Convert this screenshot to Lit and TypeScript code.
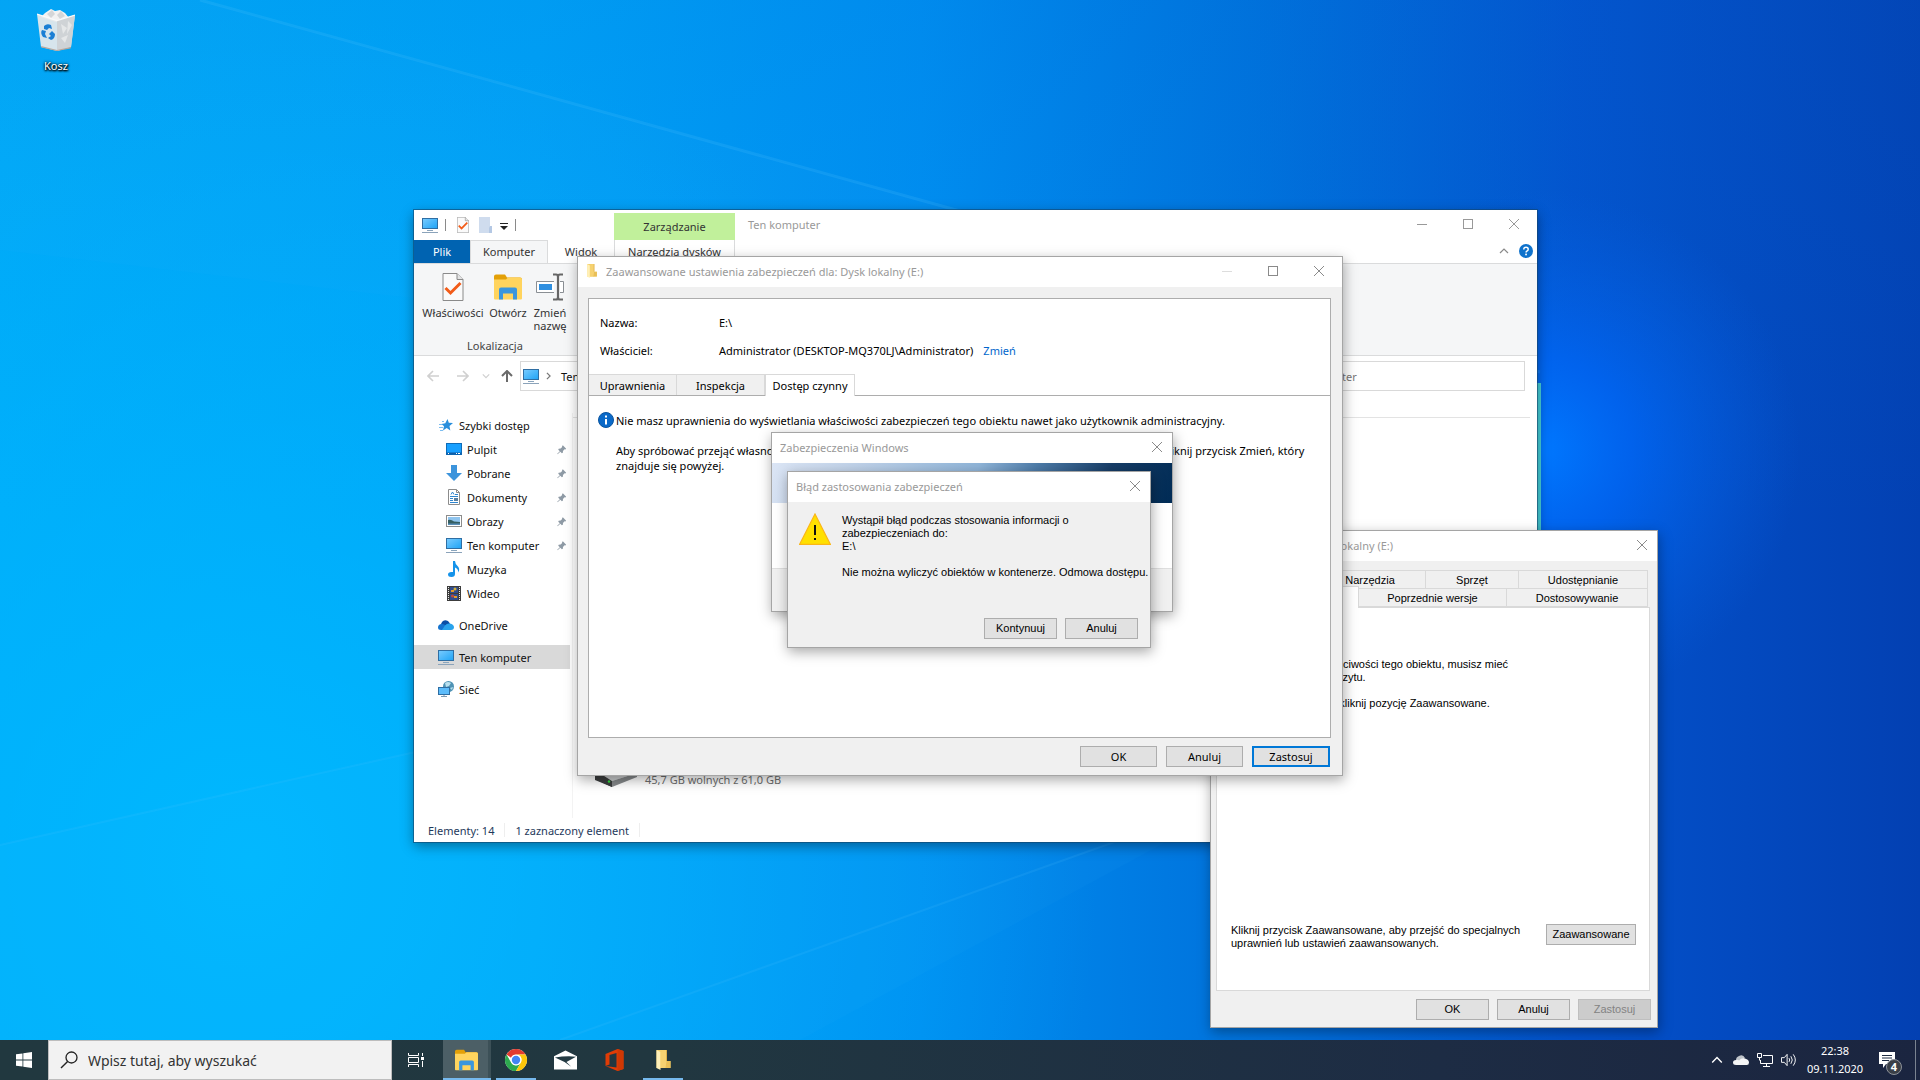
import { LitElement, html, css, svg, nothing, TemplateResult } from "lit";
import { customElement, property } from "lit/decorators.js";

/* ---------- Icons ---------- */

const monitor = svg`
  <defs><linearGradient id="scr" x1="0" y1="0" x2="1" y2="1"><stop offset="0" stop-color="#7accff"/><stop offset="1" stop-color="#1ea3f5"/></linearGradient></defs>
  <rect x="0.5" y="1.5" width="15" height="10" fill="url(#scr)" stroke="#2f6ea3"/>
  <path d="M5 13.5h6" stroke="#8aa5bd"/><path d="M0 15.5h16" stroke="#8ba3ba"/>`;

const explorerFolder = svg`
  <path d="M0 2q0-2 2-2h9l2 3h13q2 0 2 2v5H0z" fill="#e3a008"/>
  <path d="M0 5h12l2-2h12q2 0 2 2v19q0 1-1 1H1q-1 0-1-1z" fill="#ffd45e"/>
  <path d="M5 25V15q0-2 2-2h14q2 0 2 2v10h-4v-6h-10v6z" fill="#3a96dd"/>`;

const checkedPage = svg`
  <path d="M.5.5h14l6 6v21H.5z" fill="#fafafa" stroke="#8a8a8a"/>
  <path d="M14.5.5v6h6" fill="#e4e4e4" stroke="#8a8a8a"/>
  <path d="M3 15l5 5L18 10" fill="none" stroke="#f25c19" stroke-width="3"/>`;

const ICONS: Record<string, [string, TemplateResult]> = {
  monitor: ["0 0 16 16", monitor],
  explorer: ["0 0 28 25", explorerFolder],
  properties: ["0 0 21 28", checkedPage],
  blankfolder: ["0 0 13 16", svg`<path d="M0 0h11v10h2v6H0z" fill="#cfdcee"/><path d="M11 9h2v7h-3v-5z" fill="#b4c8e4"/>`],
  rename: ["0 0 28 27", svg`
    <path d="M18 8H.5v11H18M24 8h3.500v11H24" fill="#fff" stroke="#8a8f94"/>
    <rect x="3" y="10.500" width="13" height="6" fill="#2f8fe0"/>
    <path d="M22 2.500v22" stroke="#666" stroke-width="2.200"/>
    <path d="M17 1h3q2 0 2 2 0-2 2-2h3M17 26h3q2 0 2-2 0 2 2 2h3" fill="none" stroke="#666" stroke-width="2.200"/>`],
  minimize: ["0 0 10 10", svg`<path d="M0 5.500h10" stroke="currentColor"/>`],
  maximize: ["0 0 10 10", svg`<rect x=".5" y=".5" width="9" height="9" fill="none" stroke="currentColor"/>`],
  close: ["0 0 10 10", svg`<path d="M0 0l10 10M10 0L0 10" stroke="currentColor"/>`],
  caretline: ["0 0 8 8", svg`<path d="M0 .5h8" stroke="#222"/><path d="M0 3h8L4 7z" fill="#222"/>`],
  up: ["0 0 10 6", svg`<path d="M1 5l4-4 4 4" fill="none" stroke="currentColor" stroke-width="1.200"/>`],
  down: ["0 0 10 6", svg`<path d="M1 1l4 4 4-4" fill="none" stroke="currentColor" stroke-width="1.500"/>`],
  right: ["0 0 6 10", svg`<path d="M1 1l4 4-4 4" fill="none" stroke="currentColor" stroke-width="1.500"/>`],
  help: ["0 0 14 14", svg`<circle cx="7" cy="7" r="7" fill="#0f72cc"/><path d="M4.800 5.400q0-2.200 2.200-2.200t2.200 2q0 1.200-1.300 1.900-.8.500-.8 1.400" fill="none" stroke="#fff" stroke-width="1.500"/><rect x="6.200" y="9.600" width="1.700" height="1.700" fill="#fff"/>`],
  back: ["0 0 12 12", svg`<path d="M12 6H1M6 1L1 6l5 5" fill="none" stroke="currentColor" stroke-width="1.600"/>`],
  forward: ["0 0 12 12", svg`<path d="M0 6h11M6 1l5 5-5 5" fill="none" stroke="currentColor" stroke-width="1.600"/>`],
  parent: ["0 0 12 12", svg`<path d="M6 12V1M1 6l5-5 5 5" fill="none" stroke="currentColor" stroke-width="2"/>`],
  star: ["0 0 16 16", svg`<path d="M9.500 2l1.300 3.700L15 6l-3.500 3 .8 4.500L8.700 11 5 13.500l1-4.200L3.500 7l3.800-.8z" fill="#2a8fdc"/><path d="M1 7.500h3M1 10.500h4M2 13.500h3M4 4.500h2" stroke="#7cbdf0"/>`],
  desktop: ["0 0 16 16", svg`<rect x=".5" y="2.500" width="15" height="11" fill="#18a0ff" stroke="#0e6cb8"/><path d="M.5 12.500h15" stroke="#0e5ea8" stroke-width="2"/><path d="M2 12.500h1M10 12.500h1M12 12.500h2" stroke="#fff"/>`],
  download: ["0 0 16 16", svg`<path d="M5 0h6v8h5l-8 8-8-8h5z" fill="#3c94dc"/>`],
  document: ["0 0 16 16", svg`<path d="M2.500.5h8l3 3v12h-11z" fill="#fff" stroke="#8c8c8c"/><path d="M10.500.5v3h3" fill="none" stroke="#8c8c8c"/><path d="M5 5.500l1.500-2.500L8 5.500M9 5.500h3M4 7.500h8M4 13.500h8M4 9.500h3M4 11.500h3" stroke="#2f86cf" fill="none"/><rect x="8" y="9" width="4" height="3" fill="#5a7f9e"/>`],
  pictures: ["0 0 16 16", svg`<rect x=".5" y="2.500" width="15" height="11" fill="#fff" stroke="#8c8c8c"/><rect x="2" y="4" width="12" height="8" fill="#8fc4ee"/><path d="M2 7q3-1 6 1.500l6 .5v3H2z" fill="#355f63"/><path d="M2 10.500h12V12H2z" fill="#5a8fb8"/>`],
  music: ["0 0 16 16", svg`<path d="M7 0h2q0 3 3 5.500 2 2 .5 6Q12 7.500 9 6.500V13q0 3-3.500 3Q2 16 2 13.500T5.500 11H7z" fill="#1593ea"/>`],
  video: ["0 0 16 16", svg`<rect x="1" y="1" width="14" height="15" fill="#3c3c3c"/><rect x="4" y="2" width="8" height="6" fill="#314d8c"/><rect x="4" y="9" width="8" height="6" fill="#314d8c"/><path d="M5 5h3v2H5zM8 11h3v2H8z" fill="#e39a2b"/><circle cx="9" cy="4" r="1.500" fill="#d4b13a"/><circle cx="6.500" cy="11" r="1.500" fill="#c1493a"/><path d="M2.500 2v14M13.500 2v14" stroke="#e8e8e8" stroke-dasharray="1 1"/>`],
  onedrive: ["0 0 16 16", svg`<path d="M3 8q0-3 3-4.500Q9.500 2 12 6.500L8 10z" fill="#0a4fa6"/><path d="M0 10.500Q0 7.500 3 7q2-.5 4 1l5 5H3q-3 0-3-2.500z" fill="#1473cf"/><path d="M7 8.500Q9 6 12 6.500q3.500.5 4 3.500 0 3-3 3H4z" fill="#29a3ec"/>`],
  network: ["0 0 16 16", svg`<circle cx="10.500" cy="5.500" r="5.500" fill="#4f93b5"/><path d="M7 2q3-2 6 0l-2 3-3 1zM12 7l3-1-1 3z" fill="#b9e0ee"/><rect x=".5" y="6.500" width="11" height="7" fill="#5cbcfb" stroke="#2f6ea3"/><path d="M6 14v1M3 15.500h6" stroke="#7d9bb3"/>`],
  pin: ["0 0 12 12", svg`<path d="M7 1l4 4-1 1-1-.2L7.200 7.700 7 10 5.800 10.500 4 8.600.7 11.600.3 11.200 3.400 8 1.500 6.200 2 5l2.300-.2L6.200 3 6 2z" fill="#8e9aa5"/>`],
  drive: ["0 0 42 20", svg`<path d="M0 8L17 17 17 20 0 12z" fill="#333"/><path d="M0 3L22 0 42 6 17 14z" fill="#c9cbcc"/><path d="M0 3l17 11v6L0 13z" fill="#3b3d3e"/><path d="M17 14L42 6v4L17 20z" fill="#85888a"/><circle cx="14" cy="14.500" r="1.200" fill="#31e03c"/>`],
  smallfolder: ["0 0 14 20", svg`<path d="M0 0h10v18H0z" fill="#f5d06b"/><path d="M0 0l4 2v18l-4-2z" fill="#fff0b8"/><path d="M4 2l6-2v11h4v7H4z" fill="#f6d271"/><path d="M10 11h4v7h-5z" fill="#e9bf57"/><path d="M10 0v11" stroke="#dcb04a" stroke-width="1"/>`],
  info: ["0 0 16 16", svg`<circle cx="8" cy="8" r="7.500" fill="#0a69c8" stroke="#0a549f"/><path d="M8 7v5.500" stroke="#fff" stroke-width="2"/><rect x="7" y="3.500" width="2" height="2" fill="#fff"/>`],
  warning: ["0 0 32 32", svg`<path d="M16 1L31.300 31.300H.7z" fill="#ffe000" stroke="#fbb616" stroke-width="1.200"/><path d="M16 12v10" stroke="#111" stroke-width="2"/><rect x="15" y="25" width="2" height="2" fill="#111"/>`],
  bin: ["0 0 38 43", svg`
    <path d="M8 5l6-4 4 2 5-1 5 3 4 5-13 4L4 9z" fill="#f2f2f2"/><path d="M10 6l5-4 3 4-4 4zM20 7l4-4 4 5-5 3z" fill="#d4d6d8"/>
    <path d="M0 6l20 6.500L38 7l-4 32-14 4-16-4z" fill="#e7e9eb" opacity=".93"/>
    <path d="M20 12.500L38 7l-4 32-14 4z" fill="#cfd3d6"/><path d="M24 16l6 4-4 6zM31 13l4 4-5 9zM24 30l7-3-3 8z" fill="#e5e7e8"/>
    <path d="M4 38l16 4 14-3-.5 1.500L20 43 4.500 39.500z" fill="#b9a79c"/>
    <path d="M0 6l20 6.500L38 7" fill="none" stroke="#f8fafb" stroke-width="1.200"/>
    <path d="M7 18q3-3 7-1l1 4-3-1-2 2-3-1zM5 22l4 1-1 3 2 4-4-1q-3-4-1-7zM12 26l3-3 3 3q0 5-4 6l-3-2 3-2z" fill="#1b7fd4"/>`],
  start: ["0 0 16 16", svg`<path d="M0 2.300L6.500 1.400v6.200H0zM7.300 1.300L16 0v7.600H7.300zM0 8.400h6.500v6.200L0 13.700zM7.300 8.400H16V16l-8.700-1.200z" fill="#fff"/>`],
  search: ["0 0 18 18", svg`<circle cx="11.500" cy="6.500" r="5.500" fill="none" stroke="#222" stroke-width="1.300"/><path d="M7.600 10.400L1 17" stroke="#222" stroke-width="1.400"/>`],
  taskview: ["0 0 16 16", svg`<path d="M.5 1v2.500h10V1M.5 15v-2.500h10V15M.5 5.500h10v5H.5z" fill="none" stroke="#fff"/><path d="M14.500 1v3M14.500 9v6" stroke="#fff"/><rect x="13" y="5" width="3" height="3" fill="#fff"/>`],
  chrome: ["0 0 24 24", svg`<circle cx="12" cy="12" r="11" fill="#fff"/><path d="M2.470 6.500A11 11 0 0 1 21.530 6.500H12a5.500 5.500 0 0 0-5 3.200z" fill="#e33b2e"/><path d="M2.470 6.500A11 11 0 0 0 12 23l4.760-8.250A5.500 5.500 0 0 1 7.240 14.750z" fill="#2da94f"/><path d="M21.530 6.500A11 11 0 0 1 12 23l4.760-8.250A5.500 5.500 0 0 0 15 7l-3-.5z" fill="#fdc60a"/><circle cx="12" cy="12" r="5.200" fill="#fff"/><circle cx="12" cy="12" r="4.200" fill="#4285f4"/>`],
  mail: ["0 0 24 20" , svg`<path d="M0 6L12 0l12 6v14H0z" fill="#fff"/><path d="M1 7.500q11-2 22-1L13 12l5 5-7-5z" fill="#233a43"/>`],
  office: ["0 0 18 22", svg`<path d="M0 5l12-5 6 2v18l-6 2-12-5 11 1.500V4L4 6v9.500L0 17z" fill="#e03c06"/><path d="M12 0l6 2v18l-6 2z" fill="#d03804"/>`],
  traycloud: ["0 0 16 12", svg`<path d="M3 6q0-3 3-4 4-2 6 2l-5 4z" fill="#bfc4ca"/><path d="M3 11q-3 0-3-2.500T3 6q2-.5 3 .5Q8.500 3.500 12 4.500q4 1 4 4T13 11z" fill="#f4f5f6"/>`],
  ethernet: ["0 0 16 14", svg`<path d="M6 2.500h9.500v8H3.500V7M9.500 11v2.500M6 13.500h7" fill="none" stroke="#fff"/><path d="M.5.5h4v4h-4zM2.500 4.500v3" fill="none" stroke="#fff"/>`],
  speaker: ["0 0 17 14", svg`<path d="M.5 4.500h3l3-3.500v12l-3-3.500h-3z" fill="none" stroke="#fff"/><path d="M8.500 5q1.500 2 0 4M10.500 3q3 4 0 8M13 1q4.500 6 0 12" fill="none" stroke="#fff"/>`],
  notice: ["0 0 16 16", svg`<path d="M0 0h16v12H7l-3 4v-4H0z" fill="#fff"/><path d="M3 3.500h10M3 6h10M3 8.500h7" stroke="#1d2b42"/>`],
};

@customElement("ui-icon")
export class UiIcon extends LitElement {
  @property() name = "";
  static styles = css`
    :host { display: inline-flex; flex: none; width: 16px; height: 16px; }
    svg { width: 100%; height: 100%; display: block; }
  `;
  render() {
    const [box, shape] = ICONS[this.name];
    return html`<svg viewBox=${box} preserveAspectRatio="xMidYMid meet" aria-hidden="true">${shape}</svg>`;
  }
}

const base = css`
  * { box-sizing: border-box; }
  button, input { font: inherit; color: inherit; margin: 0; }
  p { margin: 0; }
`;

/* ---------- Window frame ---------- */

@customElement("desk-window")
export class DeskWindow extends LitElement {
  @property() heading = "";
  @property() icon = "";
  @property({ type: Boolean }) sizable = false;

  static styles = [base, css`
    :host { position: absolute; display: flex; flex-direction: column; box-sizing: border-box; border: 1px solid #a5a5a5; background: #f0f0f0; box-shadow: 1px 4px 12px rgba(0, 0, 0, 0.34); }
    .bar { display: flex; align-items: center; height: 30px; flex: none; background: #fff; color: #999; padding: 0 0 2px 8px; }
    .title { flex: 1; white-space: nowrap; }
    .lead { width: 12px; height: 14px; margin-right: 8px; }
    .lead.drive { width: 16px; }
    .cap { width: 30px; height: 28px; border: 0; padding: 0; background: none; display: flex; align-items: center; justify-content: center; color: #8a8a8a; }
    .cap.wide { width: 46px; }
    .cap:disabled { color: #ddd; }
    .cap ui-icon { width: 10px; height: 10px; }
  `];

  render() {
    return html`
      <header class="bar">
        ${this.icon ? html`<ui-icon class="lead ${this.icon}" name=${this.icon}></ui-icon>` : nothing}
        <span class="title">${this.heading}</span>
        ${this.sizable ? html`
          <button class="cap wide" disabled aria-label="Minimalizuj"><ui-icon name="minimize"></ui-icon></button>
          <button class="cap wide" aria-label="Maksymalizuj"><ui-icon name="maximize"></ui-icon></button>` : nothing}
        <button class="cap ${this.sizable ? "wide" : ""}" aria-label="Zamknij"><ui-icon name="close"></ui-icon></button>
      </header>
      <slot></slot>`;
  }
}

/* ---------- File explorer ---------- */

const TREE = [
  { label: "Szybki dostęp", icon: "star", level: 0 },
  { label: "Pulpit", icon: "desktop", level: 1, pinned: true },
  { label: "Pobrane", icon: "download", level: 1, pinned: true },
  { label: "Dokumenty", icon: "document", level: 1, pinned: true },
  { label: "Obrazy", icon: "pictures", level: 1, pinned: true },
  { label: "Ten komputer", icon: "monitor", level: 1, pinned: true },
  { label: "Muzyka", icon: "music", level: 1 },
  { label: "Wideo", icon: "video", level: 1 },
  { label: "OneDrive", icon: "onedrive", level: 0 },
  { label: "Ten komputer", icon: "monitor", level: 0, selected: true },
  { label: "Sieć", icon: "network", level: 0 },
];

@customElement("file-explorer")
export class FileExplorer extends LitElement {
  static styles = [base, css`
    :host { position: absolute; display: flex; flex-direction: column; background: #fff; box-shadow: 0 0 0 1px rgba(20, 70, 110, 0.6), 0 4px 12px rgba(0, 0, 0, 0.4); }
    button { border: 0; background: none; padding: 0; }
    .head { display: grid; grid-template-columns: 200px 121px 1fr; height: 53px; flex: none; }
    .left { display: flex; flex-direction: column; }
    .quick { display: flex; align-items: center; height: 30px; padding-left: 8px; }
    .rule { width: 1px; height: 12px; background: #8a8a8a; }
    .quick .rule { margin: 0 11px 0 7px; }
    .quick .page { width: 12px; height: 16px; margin-right: 10px; }
    .quick button { display: flex; }
    .blank { width: 13px; height: 16px; }
    .caret { width: 8px; height: 8px; margin-left: 8px; margin-top: 4px; }
    .tabs { display: flex; height: 23px; color: #333; }
    .tabs button { height: 23px; width: 66px; }
    .tabs .file { width: 56px; background: #0063b1; color: #fff; }
    .tabs .current { width: 78px; background: #f5f6f7; border: 1px solid #dadbdc; border-bottom: 0; height: 24px; padding-bottom: 2px; }
    .context { display: flex; flex-direction: column; padding-top: 3px; text-align: center; color: #333; }
    .context span { background: #c1f09b; height: 27px; line-height: 27px; }
    .context button { height: 23px; border: 1px solid #dadbdc; border-width: 0 1px; }
    .caption { display: flex; flex-direction: column; }
    .row { display: flex; align-items: center; color: #999; height: 28px; padding-left: 13px; }
    .row .title { flex: 1; }
    .cap { width: 46px; height: 28px; display: flex; justify-content: center; align-items: center; }
    .cap ui-icon { width: 10px; height: 10px; }
    .tools { display: flex; flex: 1; justify-content: flex-end; align-items: center; gap: 10px; padding-right: 4px; color: #8a8a8a; }
    .tools button { display: flex; }
    .tools ui-icon { width: 14px; height: 14px; }
    .tools .fold { width: 10px; height: 6px; }
    .ribbon { height: 93px; flex: none; background: #f5f6f7; border: 1px solid #dadbdc; border-width: 1px 0; display: flex; color: #444; }
    .group { display: flex; flex-direction: column; align-items: center; width: 162px; }
    .actions { display: flex; padding-top: 9px; height: 74px; align-items: flex-start; }
    .actions button { display: flex; flex-direction: column; align-items: center; gap: 5px; line-height: 13px; width: 44px; color: #333; }
    .actions button:first-child { width: 66px; }
    .actions button:last-child { width: 40px; }
    .actions ui-icon { width: 28px; height: 28px; }
    .nav { display: flex; align-items: center; height: 40px; flex: none; padding: 0 12px 0 13px; color: #d0d0d0; }
    .nav > button { display: flex; margin-right: 18px; }
    .nav > button ui-icon { width: 12px; height: 12px; }
    .nav > .next { margin-right: 13px; }
    .nav > .recent { margin-right: 11px; }
    .nav > .recent ui-icon { width: 8px; height: 6px; }
    .nav > .parent { color: #6a6a6a; margin-right: 7px; }
    .crumbs { display: flex; align-items: center; gap: 7px; flex: 1; height: 30px; border: 1px solid #d9d9d9; padding-left: 2px; color: #777; }
    .crumbs .sep { width: 5px; height: 8px; }
    .crumbs span { color: #111; margin-left: 3px; }
    .find { width: 336px; margin-left: 10px; height: 30px; border: 1px solid #d9d9d9; padding: 0 0 0 34px; outline: 0; background: #fff; }
    .find::placeholder { color: #767676; opacity: 1; }
    .body { display: flex; flex: 1; min-height: 0; padding-top: 17px; }
    .tree { width: 159px; flex: none; display: flex; flex-direction: column; padding: 0; border-right: 1px solid #f3f3f3; list-style: none; margin: 0; }
    .item a { display: flex; align-items: center; height: 24px; gap: 5px; padding: 0 3px 0 24px; width: 156px; color: #111; text-decoration: none; }
    .item.child a { padding-left: 32px; }
    .item.root:not(:first-child) { margin-top: 8px; }
    .item.selected a { background: #d9d9d9; }
    .item span { flex: 1; white-space: nowrap; }
    .item .pin { width: 10px; height: 11px; }
    .files { flex: 1; display: flex; flex-direction: column; justify-content: space-between; margin-right: 7px; border-top: 1px solid #e3e3e3; margin-top: 4px; }
    .drive { display: flex; align-items: flex-end; gap: 8px; margin: auto 0 31px 22px; color: #6d6d6d; }
    .drive ui-icon { width: 42px; height: 20px; }
    .status { display: flex; align-items: center; gap: 10px; height: 24px; flex: none; padding-left: 14px; color: #1e395b; }
    .status .rule { height: 14px; background: #eee; }
  `];

  render() {
    return html`
      <header class="head">
        <div class="left">
          <div class="quick">
            <ui-icon name="monitor"></ui-icon><i class="rule"></i>
            <button aria-label="Właściwości"><ui-icon class="page" name="properties"></ui-icon></button>
            <button aria-label="Nowy folder"><ui-icon class="blank" name="blankfolder"></ui-icon></button>
            <button aria-label="Dostosuj pasek narzędzi"><ui-icon class="caret" name="caretline"></ui-icon></button>
            <i class="rule"></i>
          </div>
          <div class="tabs"><button class="file">Plik</button><button class="current">Komputer</button><button>Widok</button></div>
        </div>
        <div class="context"><span>Zarządzanie</span><button>Narzędzia dysków</button></div>
        <div class="caption">
          <div class="row">
            <span class="title">Ten komputer</span>
            <button class="cap" aria-label="Minimalizuj"><ui-icon name="minimize"></ui-icon></button>
            <button class="cap" aria-label="Maksymalizuj"><ui-icon name="maximize"></ui-icon></button>
            <button class="cap" aria-label="Zamknij"><ui-icon name="close"></ui-icon></button>
          </div>
          <div class="tools">
            <button aria-label="Zwiń wstążkę"><ui-icon class="fold" name="up"></ui-icon></button>
            <button aria-label="Pomoc"><ui-icon name="help"></ui-icon></button>
          </div>
        </div>
      </header>
      <section class="ribbon">
        <div class="group">
          <div class="actions">
            <button><ui-icon name="properties"></ui-icon>Właściwości</button>
            <button><ui-icon name="explorer"></ui-icon>Otwórz</button>
            <button><ui-icon name="rename"></ui-icon>Zmień<br>nazwę</button>
          </div>
          <span>Lokalizacja</span>
        </div>
      </section>
      <nav class="nav">
        <button aria-label="Wstecz"><ui-icon name="back"></ui-icon></button>
        <button class="next" aria-label="Dalej"><ui-icon name="forward"></ui-icon></button>
        <button class="recent" aria-label="Ostatnie lokalizacje"><ui-icon name="down"></ui-icon></button>
        <button class="parent" aria-label="W górę"><ui-icon name="parent"></ui-icon></button>
        <div class="crumbs"><ui-icon name="monitor"></ui-icon><ui-icon class="sep" name="right"></ui-icon><span>Ten komputer</span></div>
        <input class="find" type="search" aria-label="Przeszukaj" placeholder="Przeszukaj: Ten komputer">
      </nav>
      <div class="body">
        <ul class="tree">
          ${TREE.map((n) => html`
            <li class="item ${n.level ? "child" : "root"} ${n.selected ? "selected" : ""}">
              <a href="#"><ui-icon name=${n.icon}></ui-icon><span>${n.label}</span>${n.pinned ? html`<ui-icon class="pin" name="pin"></ui-icon>` : nothing}</a>
            </li>`)}
        </ul>
        <main class="files">
          <div class="drive"><ui-icon name="drive"></ui-icon><span>45,7 GB wolnych z 61,0 GB</span></div>
        </main>
      </div>
      <footer class="status"><span>Elementy: 14</span><i class="rule"></i><span>1 zaznaczony element</span><i class="rule"></i></footer>`;
  }
}

/* ---------- Taskbar ---------- */

const PINNED = [
  { label: "Eksplorator plików", icon: "explorer", cls: "active" },
  { label: "Google Chrome", icon: "chrome", cls: "open" },
  { label: "Poczta", icon: "mail", cls: "" },
  { label: "Office", icon: "office", cls: "" },
  { label: "Folder", icon: "smallfolder", cls: "open" },
];

@customElement("task-bar")
export class TaskBar extends LitElement {
  static styles = [base, css`
    :host { display: flex; height: 40px; flex: none; background: linear-gradient(90deg, #21383f 0, #213740 35%, #1d2c44 75%, #1b2540 100%); color: #fff; position: relative; }
    button { border: 0; padding: 0; background: none; display: flex; align-items: center; justify-content: center; flex: none; height: 40px; }
    .start { width: 48px; }
    .search { display: flex; align-items: center; gap: 10px; width: 344px; background: #f2f2f2; border: 1px solid #bdbdbd; padding: 0 11px; }
    .search ui-icon { width: 18px; height: 20px; }
    .search input { border: 0; outline: 0; background: none; flex: 1; min-width: 0; padding: 0; font-size: 14px; height: 30px; line-height: 24px; }
    .search input::placeholder { color: #333; opacity: 1; }
    .view { width: 48px; }
    .apps { display: flex; gap: 9px; margin-left: 3px; }
    .app { width: 40px; border-bottom: 2px solid transparent; padding-top: 2px; }
    .app.open { border-color: #76b9ed; }
    .app.active { border-color: #76b9ed; background: #4c5f66; width: 48px; margin-right: -4px; box-shadow: inset -3px 0 #3c5057; padding-right: 1px; }
    .app ui-icon { width: 23px; height: 22px; }
    .app ui-icon.chrome { width: 24px; height: 24px; }
    .app ui-icon.smallfolder { height: 20px; }
    .tray { margin-left: auto; display: flex; align-items: center; }
    .tray > button { width: 24px; }
    .up { width: 12px; height: 8px; }
    .clock { font-size: 11px; line-height: 18px; text-align: center; width: 68px; }
    .tray > .notice { width: 46px; padding-right: 10px; }
    .bell { display: flex; position: relative; }
    .badge { position: absolute; left: 7px; top: 7px; width: 16px; height: 16px; border-radius: 50%; background: #3a3f47; border: 1px solid #8d9299; font-size: 11px; line-height: 14px; font-weight: 700; text-align: center; }
    .peek { width: 5px; height: 40px; border-left: 1px solid #7a8390; }
  `];

  render() {
    return html`
      <button class="start" aria-label="Start"><ui-icon name="start"></ui-icon></button>
      <label class="search"><ui-icon name="search"></ui-icon><input type="text" aria-label="Wyszukaj" placeholder="Wpisz tutaj, aby wyszukać"></label>
      <button class="view" aria-label="Widok zadań"><ui-icon name="taskview"></ui-icon></button>
      <div class="apps">
        ${PINNED.map((a) => html`<button class="app ${a.cls}" aria-label=${a.label}><ui-icon class=${a.icon} name=${a.icon}></ui-icon></button>`)}
      </div>
      <div class="tray">
        <button aria-label="Pokaż ukryte ikony"><ui-icon class="up" name="up"></ui-icon></button>
        <button aria-label="OneDrive"><ui-icon name="traycloud"></ui-icon></button>
        <button aria-label="Sieć"><ui-icon name="ethernet"></ui-icon></button>
        <button aria-label="Głośność"><ui-icon name="speaker"></ui-icon></button>
        <div class="clock">22:38<br>09.11.2020</div>
        <button class="notice" aria-label="Powiadomienia"><span class="bell"><ui-icon name="notice"></ui-icon><span class="badge">4</span></span></button>
        <i class="peek"></i>
      </div>`;
  }
}

/* ---------- Desktop ---------- */

@customElement("app-root")
export class AppRoot extends LitElement {
  static styles = [base, css`
    :host { display: flex; flex-direction: column; height: 100vh; overflow: hidden; font-family: "Noto Sans", "Open Sans", sans-serif; font-size: 11px; line-height: 15px; color: #000; }
    .desktop { flex: 1; position: relative; overflow: hidden; min-height: 0; }
    .wall { position: absolute; inset: 0; width: 100%; height: 100%; }
    .shortcut { position: relative; width: 76px; margin: 8px 0 0 18px; display: flex; flex-direction: column; align-items: center; gap: 7px; color: #fff; text-decoration: none; text-shadow: 0 1px 2px #000, 1px 1px 2px #000, 0 0 3px #000; }
    .shortcut ui-icon { width: 38px; height: 43px; }
    .explorer { left: 414px; top: 210px; width: 1123px; height: 632px; }
    .props { left: 1210px; top: 530px; width: 448px; height: 498px; }
    .advanced { left: 577px; top: 256px; width: 766px; height: 520px; }
    .security { left: 771px; top: 432px; width: 402px; height: 180px; }
    .error { left: 787px; top: 471px; width: 364px; height: 177px; }
    .classic { font-family: "Liberation Sans", sans-serif; font-size: 11px; line-height: 13px; }
    .btn { border: 1px solid #adadad; background: #e1e1e1; width: 73px; height: 21px; padding: 0; flex: none; }
    .btn:disabled { background: #ccc; border-color: #bfbfbf; color: #838383; }
    .btns { display: flex; justify-content: flex-end; gap: 8px; }

    .tabrow { display: flex; margin: 0 3px 0 2px; }
    .tabrow button { height: 19px; margin-bottom: -1px; border: 1px solid #d9d9d9; background: #f0f0f0; padding: 1px 0 0; margin-left: -1px; }
    .tabrow .general { width: 98px; }
    .tabrow .tools { width: 112px; }
    .tabrow .hardware { width: 94px; }
    .tabrow .rest { flex: 1; }
    .tabrow .cur { width: 143px; margin-top: -2px; height: 22px; background: #fff; border-bottom: 0; position: relative; margin-left: -2px; }
    .tabrow .versions { width: 149px; }
    .sheet { margin-top: 9px; display: flex; flex-direction: column; flex: 1; padding: 0 6px 7px 5px; min-height: 0; }
    .page { flex: 1; border: 1px solid #d9d9d9; background: #fff; display: flex; flex-direction: column; justify-content: space-between; padding: 50px 13px 40px 14px; margin: 0 1px 8px 0; }
    .lead { margin-left: 16px; }
    .more { display: flex; justify-content: space-between; align-items: flex-start; }
    .more .btn { width: 90px; }

    .adv { display: flex; flex-direction: column; flex: 1; padding: 11px 11px 8px 10px; gap: 8px; }
    .panel { flex: 1; border: 1px solid #adadad; background: #fff; display: flex; flex-direction: column; }
    .owner { display: grid; grid-template-columns: 119px auto auto 1fr; row-gap: 13px; padding: 16px 0 16px 11px; }
    .owner .wide { grid-column: span 3; }
    .owner a { color: #0066cc; text-decoration: none; margin-left: 10px; }
    .advtabs { display: flex; border-bottom: 1px solid #adadad; }
    .advtabs button { height: 21px; width: 88px; padding: 0; border: 1px solid #d9d9d9; border-width: 1px 1px 0 0; background: #f0f0f0; }
    .advtabs .cur { width: 90px; height: 22px; margin-bottom: -1px; background: #fff; border-left: 1px solid #d9d9d9; }
    .note { display: grid; grid-template-columns: 16px 1fr; column-gap: 2px; row-gap: 15px; padding: 16px 9px; align-items: center; }
    .note p { white-space: nowrap; }
    .note p:last-child { grid-column: 2; }
    .adv .btns { gap: 9px; padding-right: 1px; }
    .adv .btn { width: 77px; }
    .adv .btn.default { width: 78px; border: 2px solid #0078d7; }

    .banner { height: 40px; background: linear-gradient(112deg, #dbe5f5 0, #c3d4ea 18%, #8fb4d8 50%, #4d7ba8 64%, #163c66 82%, #002b55 100%); }
    .plain { height: 66px; background: #fff; border-bottom: 1px solid #dfdfdf; }

    .alert { display: flex; flex-direction: column; justify-content: space-between; flex: 1; padding: 11px 12px 8px 11px; }
    .msg { display: flex; gap: 11px; }
    .msg ui-icon { width: 32px; height: 32px; }
    .msg p { white-space: nowrap; padding-top: 1px; }
  `];

  render() {
    return html`
      <div class="desktop">
        <svg class="wall" viewBox="0 0 1920 1040" preserveAspectRatio="none" aria-hidden="true">
          <defs>
            <linearGradient id="sky"><stop offset="0" stop-color="#00acf8"/><stop offset=".28" stop-color="#00a2f6"/><stop offset=".48" stop-color="#008ef0"/><stop offset=".65" stop-color="#0072dc"/><stop offset=".82" stop-color="#0352cc"/><stop offset="1" stop-color="#0340b2"/></linearGradient>
            <linearGradient id="shade" x1="0" y1="0" x2="0" y2="1"><stop offset="0" stop-color="#0070d8" stop-opacity=".12"/><stop offset=".5" stop-color="#0090f0" stop-opacity="0"/></linearGradient>
            <radialGradient id="glow" gradientUnits="userSpaceOnUse" cx="1540" cy="450" r="260"><stop offset="0" stop-color="#0078ff"/><stop offset=".35" stop-color="#0068f8" stop-opacity=".75"/><stop offset="1" stop-color="#0560e0" stop-opacity="0"/></radialGradient>
            <radialGradient id="cyan" gradientUnits="userSpaceOnUse" cx="250" cy="860" r="850"><stop offset="0" stop-color="#00baff" stop-opacity=".9"/><stop offset="1" stop-color="#00b0ff" stop-opacity="0"/></radialGradient>
          </defs>
          <rect width="1920" height="1040" fill="url(#sky)"/>
          <rect width="1920" height="1040" fill="url(#shade)"/>
          <rect width="1920" height="1040" fill="url(#cyan)"/>
          <rect width="1920" height="1040" fill="url(#glow)"/>
          <path d="M200 0L1540 372V430L0 250V0z" fill="#40b8ff" opacity=".05"/>
          <path d="M200 0L1540 372" stroke="#5cc8ff" stroke-width="3" opacity=".16"/>
          <path d="M0 845L1540 500V640L800 1040H0z" fill="#40c8ff" opacity=".04"/>
          <path d="M0 845L1540 500M560 1040L1540 690" stroke="#5cc8ff" stroke-width="2" opacity=".12"/>
          <rect x="1537" y="383" width="4" height="150" fill="#45cfd8"/>
        </svg>

        <a class="shortcut" href="#"><ui-icon name="bin"></ui-icon><span>Kosz</span></a>

        <file-explorer class="explorer"></file-explorer>

        <desk-window class="props" icon="drive" heading="Właściwości: Dysk lokalny (E:)">
          <div class="sheet classic">
            <div class="tabrow"><button class="general">Ogólne</button><button class="tools">Narzędzia</button><button class="hardware">Sprzęt</button><button class="rest">Udostępnianie</button></div>
            <div class="tabrow"><button class="cur">Zabezpieczenia</button><button class="versions">Poprzednie wersje</button><button class="rest">Dostosowywanie</button></div>
            <div class="page">
              <p class="lead">Aby wyświetlić właściwości tego obiektu, musisz mieć<br>uprawnienia do odczytu.<br><br>Aby kontynuować, kliknij pozycję Zaawansowane.</p>
              <div class="more">
                <p>Kliknij przycisk Zaawansowane, aby przejść do specjalnych<br>uprawnień lub ustawień zaawansowanych.</p>
                <button class="btn">Zaawansowane</button>
              </div>
            </div>
            <div class="btns"><button class="btn">OK</button><button class="btn">Anuluj</button><button class="btn" disabled>Zastosuj</button></div>
          </div>
        </desk-window>

        <desk-window class="advanced" icon="smallfolder" sizable heading="Zaawansowane ustawienia zabezpieczeń dla: Dysk lokalny (E:)">
          <div class="adv">
            <div class="panel">
              <div class="owner">
                <span>Nazwa:</span><span class="wide">E:\\</span>
                <span>Właściciel:</span><span>Administrator (DESKTOP-MQ370LJ\\Administrator)</span><a href="#">Zmień</a>
              </div>
              <div class="advtabs"><button>Uprawnienia</button><button>Inspekcja</button><button class="cur">Dostęp czynny</button></div>
              <div class="note">
                <ui-icon name="info"></ui-icon>
                <p>Nie masz uprawnienia do wyświetlania właściwości zabezpieczeń tego obiektu nawet jako użytkownik administracyjny.</p>
                <p>Aby spróbować przejąć własność danego obiektu wraz z uprawnieniami do wyświetlania jego właściwości, kliknij przycisk Zmień, który<br>znajduje się powyżej.</p>
              </div>
            </div>
            <div class="btns"><button class="btn">OK</button><button class="btn">Anuluj</button><button class="btn default">Zastosuj</button></div>
          </div>
        </desk-window>

        <desk-window class="security" heading="Zabezpieczenia Windows">
          <div class="banner"></div>
          <div class="plain"></div>
        </desk-window>

        <desk-window class="error" heading="Błąd zastosowania zabezpieczeń">
          <div class="alert classic">
            <div class="msg">
              <ui-icon name="warning"></ui-icon>
              <p>Wystąpił błąd podczas stosowania informacji o<br>zabezpieczeniach do:<br>E:\\<br><br>Nie można wyliczyć obiektów w kontenerze. Odmowa dostępu.</p>
            </div>
            <div class="btns"><button class="btn">Kontynuuj</button><button class="btn">Anuluj</button></div>
          </div>
        </desk-window>
      </div>
      <task-bar></task-bar>`;
  }
}
